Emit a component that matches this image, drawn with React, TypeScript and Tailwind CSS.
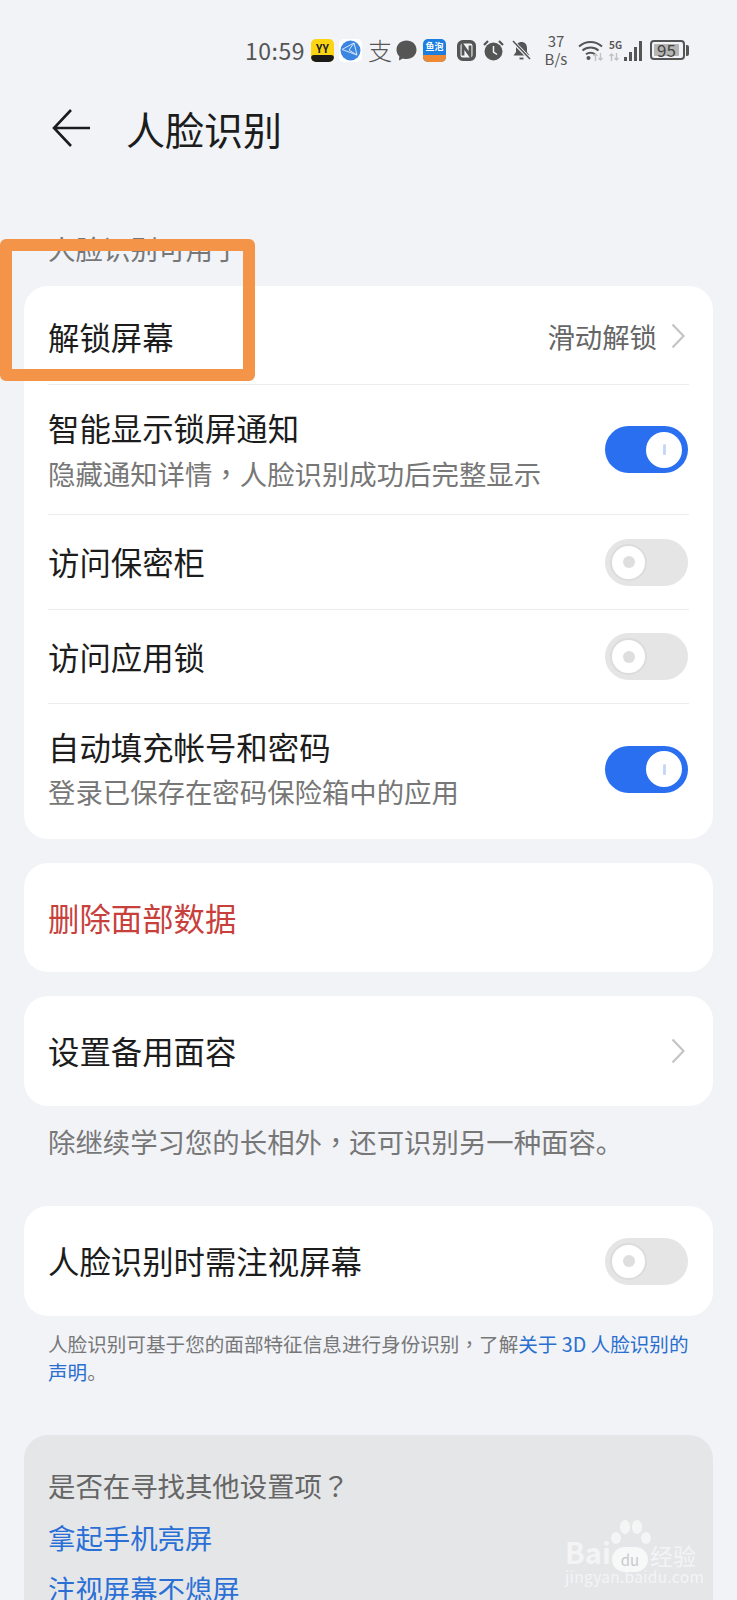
const Toggle = ({ on }: { on?: boolean }) =>
  on ? (
    <div className="flex h-[47px] w-[83px] shrink-0 items-center justify-end rounded-full bg-[#2a6ff0] pr-[6px]">
      <div className="flex h-[36px] w-[36px] items-center justify-center rounded-full bg-white">
        <div className="h-[11px] w-[3px] rounded-full bg-[#c6d8f8]" />
      </div>
    </div>
  ) : (
    <div className="flex h-[47px] w-[83px] shrink-0 items-center rounded-full bg-[#e5e5e5] pl-[5px]">
      <div className="flex h-[37px] w-[37px] items-center justify-center rounded-full border-2 border-[#dcdcdc] bg-white">
        <div className="h-[12px] w-[12px] rounded-full bg-[#dedede]" />
      </div>
    </div>
  );

const Chevron = () => (
  <svg width="14" height="26" viewBox="0 0 14 26" fill="none" className="shrink-0">
    <path d="M1.5 1.5 12.5 13 1.5 24.5" stroke="#c4c4c4" strokeWidth="2.2" />
  </svg>
);

const Divider = () => <div className="mx-[24px] h-px bg-[#ececec]" />;

// punctuation sits in the middle of its box in the reference, as in the TC cut
const Mark = ({ children }: { children: string }) => (
  <span className="font-['Noto_Sans_CJK_TC']">{children}</span>
);

const Row = ({
  title,
  sub,
  h,
  on,
}: {
  title: string;
  sub?: React.ReactNode;
  h: string;
  on?: boolean;
}) => (
  <div className={`flex items-center justify-between pl-[24px] pr-[25px] ${h}`}>
    <div>
      <div className="text-[31.4px] leading-[44px] text-[#1c1c1c]">{title}</div>
      {sub && <div className="text-[27.4px] leading-[44px] text-[#777777]">{sub}</div>}
    </div>
    <Toggle on={on} />
  </div>
);

const TinyArrows = () => (
  <svg width="10" height="8" viewBox="0 0 10 8" fill="none" stroke="#c2c2c2" strokeWidth="1.400">
    <path d="M2.500 8V1M0.500 3l2-2 2 2" />
    <path d="M7.500 0v7M5.500 5l2 2 2-2" />
  </svg>
);

const StatusBar = () => (
  <div className="mt-[18px] flex h-[64px] items-center pl-[245px] text-[#555555]">
    <span className="w-[60px] text-[23px] leading-none tracking-[0.5px]">10:59</span>
    <div className="ml-[6px] flex h-[23px] w-[23px] flex-col overflow-hidden rounded-[5px] bg-[#fbd512]">
      <div className="flex-1 pt-[3px] text-center text-[11px] font-bold leading-[13px] text-[#222222]">YY</div>
      <div className="h-[7px] rounded-t-[3px] bg-[#1c1a16]" />
    </div>
    <div className="ml-[5px] flex h-[23px] w-[23px] items-center justify-center rounded-[5px] bg-white">
      <svg width="21" height="21" viewBox="0 0 21 21">
        <circle cx="10.5" cy="10.5" r="10" fill="#3b86e0" />
        <path d="M2 9.500 14 3l3 12L2 9.500ZM14 3 9 10l8 5" fill="none" stroke="#d8e8fa" strokeWidth="1" />
      </svg>
    </div>
    <span className="ml-[6px] w-[22px] text-center text-[24px] font-light leading-none">支</span>
    <svg width="21" height="21" viewBox="0 0 21 21" className="ml-[6px]">
      <path d="M10.500 0.500c5.600 0 10 3.900 10 9.300s-4.400 9.300-10 9.300c-1.300 0-2.500-.2-3.600-.6L3 20.500l.3-4.200C1.500 14.600.5 12.400.5 9.800c0-5.400 4.400-9.300 10-9.300Z" fill="#555555" />
    </svg>
    <div className="ml-[6px] flex h-[23px] w-[23px] flex-col overflow-hidden rounded-[5px] bg-[#1c7fe0]">
      <div className="flex-1 pt-[2px] text-center text-[9px] font-bold leading-[12px] text-white">鱼泡</div>
      <div className="h-[7px] bg-[#ee8a33]" />
    </div>
    <svg width="19" height="21" viewBox="0 0 19 21" className="ml-[11px]" fill="none">
      <rect x="1.750" y="1.750" width="15.500" height="17.500" rx="4" stroke="#555555" strokeWidth="3.500" />
      <path d="M6 15.500V5.500l7 10V5.500" stroke="#555555" strokeWidth="2.800" />
    </svg>
    <svg width="21" height="21" viewBox="0 0 21 21" className="ml-[7px]">
      <circle cx="10.500" cy="11.500" r="9" fill="#555555" />
      <path d="M10.500 6v6l3.500 2.500" fill="none" stroke="#f1f3f7" strokeWidth="1.500" />
      <path d="M1 5 5 1M20 5l-4-4" stroke="#555555" strokeWidth="2.200" />
    </svg>
    <svg width="19" height="21" viewBox="0 0 19 21" className="ml-[8px]">
      <path d="M9.500 2c3.500 0 5.500 2.600 5.500 6v4l2.500 3.500h-16L4 12V8c0-3.400 2-6 5.500-6Z" fill="#555555" />
      <path d="M7.500 18.500h4" stroke="#555555" strokeWidth="1.800" />
      <path d="M1 1.500 18 19" stroke="#f1f3f7" strokeWidth="3.500" />
      <path d="M1 1 18 19" stroke="#555555" strokeWidth="1.500" />
    </svg>
    <div className="ml-[13px] w-[24px] text-center text-[15px] leading-[18px]">
      37
      <br />
      B/s
    </div>
    <div className="relative ml-[10px] h-[22px] w-[25px]">
      <svg width="25" height="22" viewBox="0 0 25 22" fill="none">
        <path d="M1 7.500c6.500-6 16.500-6 23 0" stroke="#555555" strokeWidth="2" />
        <path d="M4.500 11.500c4.500-4 11.500-4 16 0" stroke="#555555" strokeWidth="2" />
        <path d="M8 15.200c2.500-2 6.500-2 9 0" stroke="#555555" strokeWidth="2" />
        <circle cx="10.500" cy="19" r="2" fill="#555555" />
      </svg>
      <div className="absolute left-[15px] top-[14px]">
        <TinyArrows />
      </div>
    </div>
    <div className="relative ml-[6px] flex h-[22px] w-[33px] items-end justify-end gap-[2px]">
      <span className="absolute left-0 top-0 text-[10px] font-bold leading-[11px]">5G</span>
      <div className="absolute left-0 top-[14px]">
        <TinyArrows />
      </div>
      <div className="h-[4px] w-[3px] bg-[#555555]" />
      <div className="h-[9px] w-[3px] bg-[#555555]" />
      <div className="h-[14px] w-[3px] bg-[#555555]" />
      <div className="h-[20px] w-[3px] bg-[#555555]" />
    </div>
    <div className="ml-[8px] flex items-center">
      <div className="flex h-[20px] w-[35px] items-center rounded-[4px] border-2 border-[#555555] p-[2px]">
        <div className="h-full w-[25px] rounded-[1px] bg-[#b5b5b5] text-center text-[17px] leading-[12px] text-[#444444]">95</div>
      </div>
      <div className="ml-[1px] h-[11px] w-[3px] rounded-r-[2px] bg-[#555555]" />
    </div>
  </div>
);

const Watermark = () => (
  <div className="absolute left-[565px] top-[1520px] h-[63px] w-[135px] text-white/60">
    <svg width="40" height="26" viewBox="0 0 40 26" className="absolute left-[46px] top-0" fill="currentColor">
      <ellipse cx="14" cy="7" rx="5" ry="7" />
      <ellipse cx="26" cy="7" rx="5" ry="7" />
      <ellipse cx="5" cy="18" rx="5" ry="6" />
      <ellipse cx="35" cy="18" rx="5" ry="6" />
    </svg>
    <div className="absolute left-0 top-[17px] text-[29px] font-bold leading-[28px]">Bai</div>
    <div className="absolute left-[47px] top-[27px] flex h-[25px] w-[36px] items-center justify-center rounded-full bg-white/70 text-[15px] leading-none text-[#c9cacc]">du</div>
    <div className="absolute left-[85px] top-[22px] text-[23px] leading-[26px]">经验</div>
    <div className="absolute left-0 top-[47px] text-[15.5px] leading-[18px] tracking-[0.3px]">jingyan.baidu.com</div>
  </div>
);

export default function App() {
  return (
    <div
      className="relative h-[1600px] w-[737px] overflow-hidden bg-[#f1f3f7]"
      style={{ fontFamily: '"Noto Sans CJK SC", "Noto Sans", sans-serif' }}
    >
      <StatusBar />

      <div className="flex h-[92px] items-center pl-[52px]">
        <svg width="38" height="38" viewBox="0 0 38 38" fill="none">
          <path d="M19 1 2 19l17 18M2 19h36" stroke="#1c1c1c" strokeWidth="2.600" />
        </svg>
        <h1 className="ml-[36px] text-[39px] font-normal leading-none text-[#1c1c1c]">人脸识别</h1>
      </div>

      <div className="pl-[48px] pt-[56px] pb-[20px] text-[27.500px] leading-[36px] text-[#777777]">人脸识别可用于</div>

      <div className="mx-[24px] rounded-[24px] bg-white">
        <div className="flex h-[98px] items-center justify-between pl-[24px] pr-[28px] pt-[3px]">
          <span className="text-[31.400px] text-[#1c1c1c]">解锁屏幕</span>
          <div className="flex items-center gap-[14px]">
            <span className="text-[27.400px] text-[#666666]">滑动解锁</span>
            <Chevron />
          </div>
        </div>
        <Divider />
        <Row
          title="智能显示锁屏通知"
          sub={
            <span className="relative top-[1px] block">
              隐藏通知详情<Mark>，</Mark>人脸识别成功后完整显示
            </span>
          }
          h="h-[129px]"
          on
        />
        <Divider />
        <Row title="访问保密柜" h="h-[94px]" />
        <Divider />
        <Row title="访问应用锁" h="h-[93px]" />
        <Divider />
        <Row title="自动填充帐号和密码" sub="登录已保存在密码保险箱中的应用" h="h-[135px] pb-[5px]" on />
      </div>

      <div className="mx-[24px] mt-[24px] flex h-[109px] items-center rounded-[24px] bg-white pl-[24px] text-[31.400px] text-[#c8403c]">
        删除面部数据
      </div>

      <div className="mx-[24px] mt-[24px] flex h-[110px] items-center justify-between rounded-[24px] bg-white pl-[24px] pr-[28px]">
        <span className="text-[31.400px] text-[#1c1c1c]">设置备用面容</span>
        <Chevron />
      </div>

      <div className="pl-[48px] pt-[16px] text-[27.400px] leading-[38px] text-[#777777]">
        除继续学习您的长相外<Mark>，</Mark>还可识别另一种面容。
      </div>

      <div className="mx-[24px] mt-[46px] flex h-[110px] items-center justify-between rounded-[24px] bg-white pl-[24px] pr-[25px]">
        <span className="text-[31.400px] text-[#1c1c1c]">人脸识别时需注视屏幕</span>
        <Toggle />
      </div>

      <p className="px-[48px] pt-[14px] text-[19.600px] leading-[28px] text-[#777777]">
        人脸识别可基于您的面部特征信息进行身份识别<Mark>，</Mark>了解<span className="text-[#2a6fd0]">关于 3D 人脸识别的声明</span>。
      </p>

      <div className="mx-[24px] mt-[49px] h-[300px] rounded-[24px] bg-[#e5e6e8] pl-[24px] pt-[30px]">
        <div className="text-[27.400px] leading-[40px] text-[#666666]">
          是否在寻找其他设置项<Mark>？</Mark>
        </div>
        <div className="mt-[12px] text-[27.400px] leading-[40px] text-[#2a6fd6]">拿起手机亮屏</div>
        <div className="mt-[11px] text-[27.400px] leading-[40px] text-[#2a6fd6]">注视屏幕不熄屏</div>
      </div>

      <Watermark />

      <div className="absolute left-0 top-[239px] h-[142px] w-[255px] rounded-[6px] border-[12px] border-[#f39449]" />
    </div>
  );
}
